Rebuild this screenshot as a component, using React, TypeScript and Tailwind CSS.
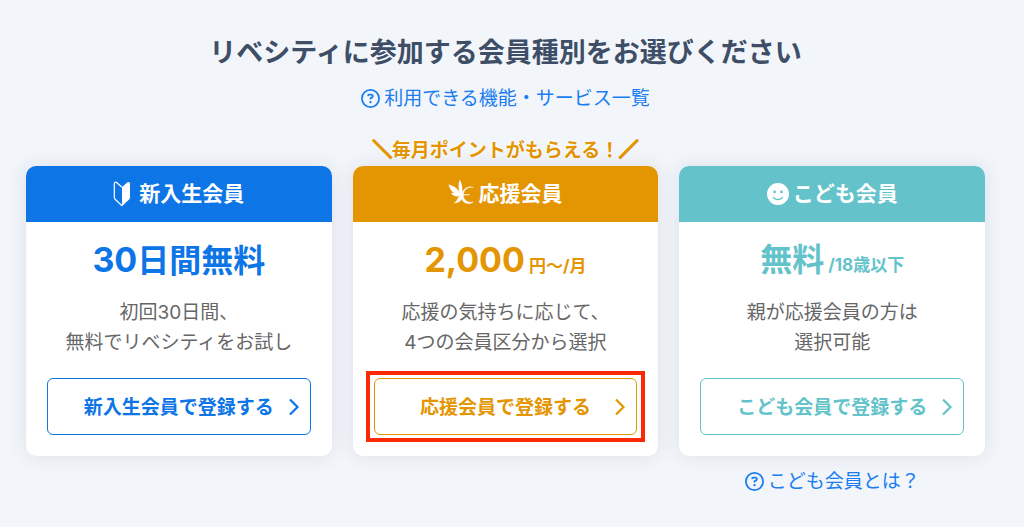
import type { ReactNode } from "react";
import { clsx } from "clsx";
import { FaFaceSmile, FaRegCircleQuestion } from "react-icons/fa6";

type Plan = {
  id: string;
  name: string;
  icon: ReactNode;
  price: string;
  unit?: string;
  description: [string, string];
  header: string;
  text: string;
  button: string;
  catchCopy?: string;
  highlighted?: boolean;
  help?: string;
};

const BeginnerIcon = () => (
  <svg viewBox="0 0 18 26" className="mr-1 h-[26px] w-[18px]" aria-hidden="true">
    <path
      d="M9 6.2 3.9 1.7C2.6.7 1.3 1.3 1.3 2.9v13.4c0 .8.3 1.4.8 2L9 24.8"
      fill="none"
      stroke="currentColor"
      strokeWidth="1.2"
      strokeLinejoin="round"
    />
    <path
      d="M9 6.2 14 1.6c1.4-1.2 3-.6 3 1.2v13.4c0 .9-.3 1.6-.9 2.2L9 25.3Z"
      fill="currentColor"
    />
  </svg>
);

const WingIcon = () => (
  <svg viewBox="0 0 26 26" className="-mt-1 h-[26px] w-[26px]" aria-hidden="true">
    <path d="M11.6.8c2.6 3.4 3.2 8.600 2.400 15.200h-1.500C10.400 11.500 9.900 5.800 11.600.8Z" fill="currentColor" />
    <path d="M.6 5.600c6 1.400 10.400 4.900 12.400 10.400-6 .4-11.200-4-12.400-10.400Z" fill="currentColor" />
    <path d="M3 14c3.500-.3 7.200.3 10.500 1.800-3.600 2.800-8.200 2-10.500-1.800Z" fill="currentColor" />
    <path d="M5.400 24.200c2.200-.9 3-2.200 3.800-4 .9-2 2.400-3.600 4.700-4.600l1.200 1.700c-1.300 4.700-5 7.100-9.700 6.900Z" fill="currentColor" />
    <path
      d="M25.200 8.500c-4.600-1.500-9.600 1.900-9.900 7.300-.3 5 4.600 8.700 9.900 7.200-3.800 2.900-9.700 1.600-11.300-2.800-2.400-6.700 4-14.600 11.300-11.700Z"
      fill="currentColor"
      stroke="currentColor"
      strokeWidth=".5"
    />
    <path d="M13 15.800h8.500" stroke="currentColor" strokeWidth="1" />
  </svg>
);

const ChevronIcon = () => (
  <svg viewBox="0 0 12 18" className="h-[18px] w-3 shrink-0" aria-hidden="true">
    <path d="m2 1.500 7.500 7.500L2 16.500" fill="none" stroke="currentColor" strokeWidth="2.200" />
  </svg>
);

const plans: Plan[] = [
  {
    id: "new",
    name: "新入生会員",
    icon: <BeginnerIcon />,
    price: "30日間無料",
    description: ["初回30日間、", "無料でリベシティをお試し"],
    header: "bg-[#0d75e6]",
    text: "text-[#0d75e6]",
    button: "border-[#0d75e6] text-[#0d75e6]",
  },
  {
    id: "support",
    name: "応援会員",
    icon: <WingIcon />,
    price: "2,000",
    unit: "円〜/月",
    description: ["応援の気持ちに応じて、", "4つの会員区分から選択"],
    header: "bg-[#e49502]",
    text: "text-[#e49502]",
    button: "border-[#e49502] text-[#e49502]",
    catchCopy: "毎月ポイントがもらえる！",
    highlighted: true,
  },
  {
    id: "kids",
    name: "こども会員",
    icon: <FaFaceSmile size={22} aria-hidden="true" />,
    price: "無料",
    unit: "/18歳以下",
    description: ["親が応援会員の方は", "選択可能"],
    header: "bg-[#64c3ca]",
    text: "text-[#64c3ca]",
    button: "border-[#64c3ca] text-[#64c3ca]",
    help: "こども会員とは？",
  },
];

const HelpLink = ({ children }: { children: ReactNode }) => (
  <a href="#" className="inline-flex items-center gap-1 text-[19px] text-[#1a7df0]">
    <FaRegCircleQuestion size={19} aria-hidden="true" />
    <span className="pt-0.5 leading-[26px]">{children}</span>
  </a>
);

// Digits are set larger so they stand as tall as the kanji beside them.
const Price = ({ value }: { value: string }) => (
  <>
    {value
      .split(/([\d,]+)/)
      .filter(Boolean)
      .map((part) => (
        <span key={part} className={/\d/.test(part) ? "text-[34px]" : "text-[32px]"}>
          {part}
        </span>
      ))}
  </>
);

const CatchCopy = ({ children }: { children: ReactNode }) => (
  <>
    <span className="[-webkit-text-stroke:2px_currentColor]">＼</span>
    {children}
    <span className="[-webkit-text-stroke:2px_currentColor]">／</span>
  </>
);

const PlanCard = ({ plan }: { plan: Plan }) => (
  <section className="flex flex-col">
    <p
      className={clsx(
        "h-8 text-center text-[19px] leading-[34px] font-bold whitespace-nowrap [text-shadow:0_0_2px_#fff,0_0_2px_#fff,0_0_3px_#fff]",
        plan.text
      )}
    >
      {plan.catchCopy && <CatchCopy>{plan.catchCopy}</CatchCopy>}
    </p>
    <div className="rounded-[10px] bg-white shadow-[0_0_20px_rgba(40,50,70,0.1)]">
      <h2
        className={clsx(
          "flex h-14 items-center justify-center gap-1 rounded-t-[10px] text-[21px] font-bold text-white",
          plan.header
        )}
      >
        {plan.icon}
        {plan.name}
      </h2>
      <div className="px-[21px] pt-4 pb-[21px] text-center">
        <p
          className={clsx(
            "flex h-11 items-baseline justify-center leading-[44px] font-bold whitespace-nowrap",
            plan.text
          )}
        >
          <Price value={plan.price} />
          {plan.unit && <span className="ml-1 text-[17px]">{plan.unit}</span>}
        </p>
        <p className="mt-4 text-[19px] leading-[30px] whitespace-nowrap text-[#666]">
          {plan.description[0]}
          <br />
          {plan.description[1]}
        </p>
        <div className="relative mt-5">
          <button
            type="button"
            className={clsx(
              "flex h-[57px] w-full items-center rounded-md border bg-white pr-[10px] pl-[22px] text-[19px] font-bold whitespace-nowrap",
              plan.button
            )}
          >
            <span className="flex-1 pt-[3px]">{plan.name}で登録する</span>
            <ChevronIcon />
          </button>
          {plan.highlighted && (
            <span className="pointer-events-none absolute -inset-x-2 -inset-y-[7px] border-4 border-[#fb2a05]" />
          )}
        </div>
      </div>
    </div>
    {plan.help && (
      <div className="mt-[11px] flex justify-center">
        <HelpLink>{plan.help}</HelpLink>
      </div>
    )}
  </section>
);

const App = () => {
  return (
    <main
      lang="ja"
      className="min-h-screen bg-[#f2f5fa] pt-[33px] pr-[39px] pb-6 pl-[26px] font-['Inter','Noto_Sans_CJK_JP',sans-serif]"
    >
      <h1 className="text-center text-[27px] leading-10 font-bold text-[#3d4e66]">
        リベシティに参加する会員種別をお選びください
      </h1>
      <div className="mt-[11px] flex justify-center">
        <HelpLink>利用できる機能・サービス一覧</HelpLink>
      </div>
      <div className="mt-[22px] grid grid-cols-3 gap-[21px]">
        {plans.map((plan) => (
          <PlanCard key={plan.id} plan={plan} />
        ))}
      </div>
    </main>
  );
};

export default App;
